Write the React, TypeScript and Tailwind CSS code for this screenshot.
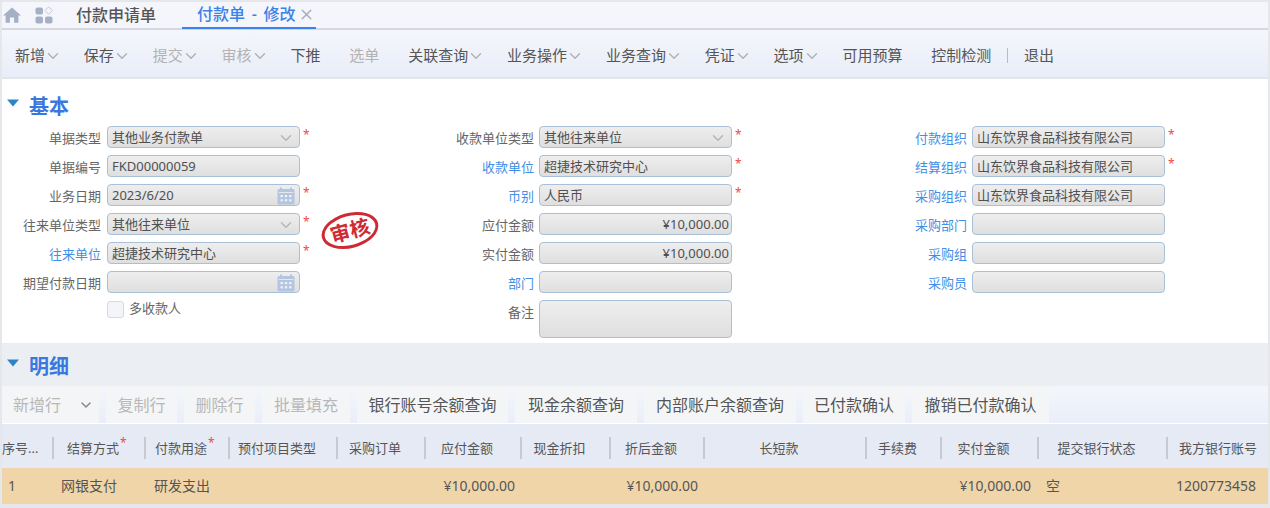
import React from 'react';
import { ChevronDown, X } from 'lucide-react';

const toolbar = [
    { text: '新增', menu: true },
    { text: '保存', menu: true },
    { text: '提交', menu: true, off: true },
    { text: '审核', menu: true, off: true },
    { text: '下推' },
    { text: '选单', off: true },
    { text: '关联查询', menu: true },
    { text: '业务操作', menu: true },
    { text: '业务查询', menu: true },
    { text: '凭证', menu: true },
    { text: '选项', menu: true },
    { text: '可用预算' },
    { text: '控制检测' },
];

interface FieldProps {
    label?: string;
    value?: string;
    link?: boolean;
    required?: boolean;
    kind?: 'select' | 'date';
    align?: 'right';
    tall?: boolean;
    narrow?: boolean;
}

const col1: FieldProps[] = [
    { label: '单据类型', value: '其他业务付款单', kind: 'select', required: true },
    { label: '单据编号', value: 'FKD00000059' },
    { label: '业务日期', value: '2023/6/20', kind: 'date', required: true },
    { label: '往来单位类型', value: '其他往来单位', kind: 'select', required: true },
    { label: '往来单位', value: '超捷技术研究中心', link: true, required: true },
    { label: '期望付款日期', kind: 'date' },
];

const col2: FieldProps[] = [
    { label: '收款单位类型', value: '其他往来单位', kind: 'select', required: true },
    { label: '收款单位', value: '超捷技术研究中心', link: true, required: true },
    { label: '币别', value: '人民币', link: true, required: true },
    { label: '应付金额', value: '¥10,000.00', align: 'right' },
    { label: '实付金额', value: '¥10,000.00', align: 'right' },
    { label: '部门', link: true },
    { label: '备注', tall: true },
];

const col3: FieldProps[] = [
    { label: '付款组织', value: '山东饮界食品科技有限公司', link: true, required: true },
    { label: '结算组织', value: '山东饮界食品科技有限公司', link: true, required: true },
    { label: '采购组织', value: '山东饮界食品科技有限公司', link: true },
    { label: '采购部门', link: true },
    { label: '采购组', link: true },
    { label: '采购员', link: true },
];

const rowButtons = [
    { text: '复制行', w: 'w-[71px]', off: true },
    { text: '删除行', w: 'w-[71px]', off: true },
    { text: '批量填充', w: 'w-[88px]', off: true },
    { text: '银行账号余额查询', w: 'w-[151px]' },
    { text: '现金余额查询', w: 'w-[122px]' },
    { text: '内部账户余额查询', w: 'w-[152px]' },
    { text: '已付款确认', w: 'w-[102px]' },
    { text: '撤销已付款确认', w: 'w-[137px]' },
];

const columns = [
    { title: '序号...', left: true },
    { title: '结算方式', required: true },
    { title: '付款用途', required: true },
    { title: '预付项目类型' },
    { title: '采购订单' },
    { title: '应付金额' },
    { title: '现金折扣' },
    { title: '折后金额' },
    { title: '长短款' },
    { title: '手续费' },
    { title: '实付金额' },
    { title: '提交银行状态' },
    { title: '我方银行账号', last: true },
];

const gridCols = 'grid grid-cols-[52px_92px_84px_108px_88px_96px_89px_94px_162px_75px_97px_129px_1fr]';

const HomeIcon = () => (
    <svg width="18" height="16" viewBox="0 0 18 16" fill="#a5b0c4">
        <path d="M9 0.5 L18 8.4 L15.4 8.4 L15.4 15.8 L11.1 15.8 L11.1 10.4 L6.9 10.4 L6.9 15.8 L2.6 15.8 L2.6 8.4 L0 8.4 Z" />
    </svg>
);

const AppsIcon = () => (
    <svg width="18" height="18" viewBox="0 0 18 18">
        <rect x="0.5" y="1.5" width="7.5" height="7" rx="2" fill="#a5b0c4" />
        <rect x="0.5" y="10.5" width="7.5" height="7" rx="2" fill="#a5b0c4" />
        <rect x="10" y="10.5" width="7.5" height="7" rx="2" fill="#a5b0c4" />
        <path d="M13.7 0.8 L17.4 4.6 L13.7 8.4 L10 4.6 Z" fill="none" stroke="#c3cad6" strokeWidth="1" />
    </svg>
);

const CalendarIcon = () => (
    <svg width="18" height="18" viewBox="0 0 18 18" fill="#b3c5e0">
        <rect x="3" y="0.5" width="2" height="3" fill="#b3c5e0" />
        <rect x="13" y="0.5" width="2" height="3" fill="#b3c5e0" />
        <rect x="0.5" y="2" width="17" height="15.5" rx="1.5" />
        <rect x="1.8" y="5" width="14.4" height="1" fill="#e6e8ec" />
        <g fill="#eef1f6">
            <rect x="3.5" y="8" width="2.4" height="2.2" />
            <rect x="7.8" y="8" width="2.4" height="2.2" />
            <rect x="12.1" y="8" width="2.4" height="2.2" />
            <rect x="3.5" y="12.2" width="2.4" height="2.2" />
            <rect x="7.8" y="12.2" width="2.4" height="2.2" />
            <rect x="12.1" y="12.2" width="2.4" height="2.2" />
        </g>
    </svg>
);

const Triangle = () => (
    <svg width="14" height="8" viewBox="0 0 14 8" className="mt-[-8px]">
        <path d="M1 0.5 H13 L7 7.5 Z" fill="#2b86c5" />
    </svg>
);

const Field: React.FC<FieldProps> = ({ label, value, link, required, kind, align, tall, narrow }) => (
    <div className={`flex ${tall ? 'h-[38px]' : 'h-[22px]'} items-start`}>
        <div className={`w-[99px] shrink-0 text-right text-[13px] leading-[24px] ${link ? 'text-[#3f8fe6]' : 'text-[#666666]'}`}>
            {label}
        </div>
        <div
            className={`${narrow ? 'ml-[5px]' : 'ml-[6px]'} flex ${tall ? 'h-[38px]' : 'h-[22px]'} w-[193px] shrink-0 items-center rounded-[4px] border border-[#a9c0d6] bg-gradient-to-b from-[#eeeeee] to-[#dfdfdf] pl-[4px] pr-[2px] pt-[1px] text-[13px] text-[#505050] ${align === 'right' ? 'justify-end' : 'justify-between'}`}
        >
            <span className="whitespace-nowrap">{value}</span>
            {kind === 'select' && <ChevronDown className="mr-[2px] h-[18px] w-[18px] text-[#b4b4b4]" strokeWidth={1.8} />}
            {kind === 'date' && (
                <span className="ml-auto mr-[2px]">
                    <CalendarIcon />
                </span>
            )}
        </div>
        {required && <span className="ml-[3px] text-[12px] leading-[18px] text-[#f04848]">*</span>}
    </div>
);

export default function App() {
    return (
        <div
            className="flex h-[508px] w-[1270px] flex-col overflow-hidden border-x-2 border-t-2 border-b-4 border-[#e6e7ea] bg-white text-[#555555]"
            style={{ fontFamily: '"Noto Sans", "Noto Sans CJK SC", sans-serif' }}
        >
            {/* tabs */}
            <div className="flex h-[28px] shrink-0 items-center border-b-2 border-[#d5d8e0] bg-[#f5f6fb]">
                <div className="ml-[1px] flex h-[26px] items-center gap-[14px]">
                    <HomeIcon />
                    <AppsIcon />
                </div>
                <div className="ml-[23px] text-[16px] font-medium text-[#555555]">付款申请单</div>
                <div className="ml-[26px] flex h-[28px] w-[134px] items-center gap-[3px] border-b-2 border-[#3b82f0] pl-[15px] text-[16px] font-medium text-[#3b82e8]">
                    <span className="whitespace-nowrap [word-spacing:2.5px]">付款单 - 修改</span>
                    <X className="h-[17px] w-[17px] text-[#a8b0bc]" strokeWidth={2.2} />
                </div>
            </div>

            {/* toolbar */}
            <div className="flex h-[49px] shrink-0 items-center gap-[24.85px] border-b-2 border-[#e3e4e8] bg-gradient-to-b from-[#f5f6fb] to-[#e8edf8] pl-[13px] pt-[4px] text-[15px]">
                {toolbar.map((item) => (
                    <div key={item.text} className={`flex items-center ${item.off ? 'text-[#b2b2b2]' : 'text-[#555555]'} ${item.menu ? '' : 'mr-[4px]'}`}>
                        <span className="whitespace-nowrap">{item.text}</span>
                        {item.menu && <ChevronDown className="-ml-[1px] -mr-[3px] h-[18px] w-[18px] text-[#b0b0b0]" strokeWidth={1.8} />}
                    </div>
                ))}
                <div className="ml-[-13px] h-[15px] w-px bg-[#b9bcc4]" />
                <div className="ml-[-9px] whitespace-nowrap">退出</div>
            </div>

            {/* basic */}
            <div className="h-[264px] shrink-0 bg-white">
                <div className="flex h-[46px] items-center gap-[9px] pl-[4px] pt-[10px] text-[20px] font-bold text-[#3a78e0]">
                    <Triangle />
                    <span>基本</span>
                </div>
                <div className="grid grid-cols-[433px_433px_1fr] pt-[1px]">
                    <div className="flex flex-col gap-[7px]">
                        {col1.map((f) => (
                            <Field key={f.label} {...f} />
                        ))}
                        <div className="ml-[105px] flex h-[18px] items-center gap-[5px] text-[13px] text-[#666666]">
                            <span className="h-[17px] w-[17px] rounded-[3px] border border-[#d7d9de] bg-[#f4f5f8]" />
                            多收款人
                        </div>
                    </div>
                    <div className="flex flex-col gap-[7px]">
                        {col2.map((f) => (
                            <Field key={f.label} narrow {...f} />
                        ))}
                    </div>
                    <div className="flex flex-col gap-[7px]">
                        {col3.map((f) => (
                            <Field key={f.label} narrow {...f} />
                        ))}
                    </div>
                </div>
            </div>

            {/* detail */}
            <div className="flex h-[43px] shrink-0 items-center gap-[9px] bg-[#ebeff3] pl-[4px] pt-[5px] text-[20px] font-bold text-[#3a78e0]">
                <Triangle />
                <span>明细</span>
            </div>
            <div className="flex h-[37px] shrink-0 gap-[7px] bg-gradient-to-b from-[#f4f6fb] to-[#e9eef9] text-[16px]">
                <div className="flex w-[97px] items-center justify-between bg-[#f4f5f7] pl-[11px] pr-[5px] text-[#b8b8b8]">
                    新增行
                    <ChevronDown className="h-[16px] w-[16px] text-[#888888]" strokeWidth={2.2} />
                </div>
                {rowButtons.map((b) => (
                    <div
                        key={b.text}
                        className={`flex items-center justify-center rounded-t-[3px] bg-[#f4f5f7] ${b.w} ${b.off ? 'text-[#b8b8b8]' : 'text-[#555555]'}`}
                    >
                        {b.text}
                    </div>
                ))}
            </div>
            <div className={`${gridCols} h-[45px] shrink-0 items-center border-t border-white bg-[#e6eaf4] pt-[3px] text-[13px] text-[#555555]`}>
                {columns.map((c) => (
                    <div key={c.title} className={`flex h-[22px] items-center whitespace-nowrap pt-[2px] ${c.last ? 'justify-center' : 'border-r-2 border-[#c5c9d0] pr-3'} ${c.left ? 'justify-start pr-0' : 'justify-center'}`}>
                        <span className="relative">
                            {c.title}
                            {c.required && <span className="absolute left-full top-[-3px] ml-[1px] text-[12px] leading-[14px] text-[#f04848]">*</span>}
                        </span>
                    </div>
                ))}
            </div>
            <div className={`${gridCols} h-[36px] shrink-0 items-center bg-[#f0d5a9] pb-[2px] text-[14px] text-[#555555]`}>
                <div className="pl-[6px]">1</div>
                <div className="pl-[7px]">网银支付</div>
                <div className="pl-[8px]">研发支出</div>
                <div />
                <div />
                <div className="pr-[7px] text-right">¥10,000.00</div>
                <div />
                <div className="pr-[7px] text-right">¥10,000.00</div>
                <div />
                <div />
                <div className="pr-[8px] text-right">¥10,000.00</div>
                <div className="pl-[7px]">空</div>
                <div className="pr-[12px] text-right">1200773458</div>
            </div>

            {/* stamp */}
            <div className="absolute left-[321px] top-[213px] flex h-[35px] w-[58px] rotate-[-15deg] items-center justify-center rounded-[50%] border-[3px] border-[#cf2a33] text-[20px] font-bold leading-none text-[#cf2a33]">
                审核
            </div>
        </div>
    );
}
